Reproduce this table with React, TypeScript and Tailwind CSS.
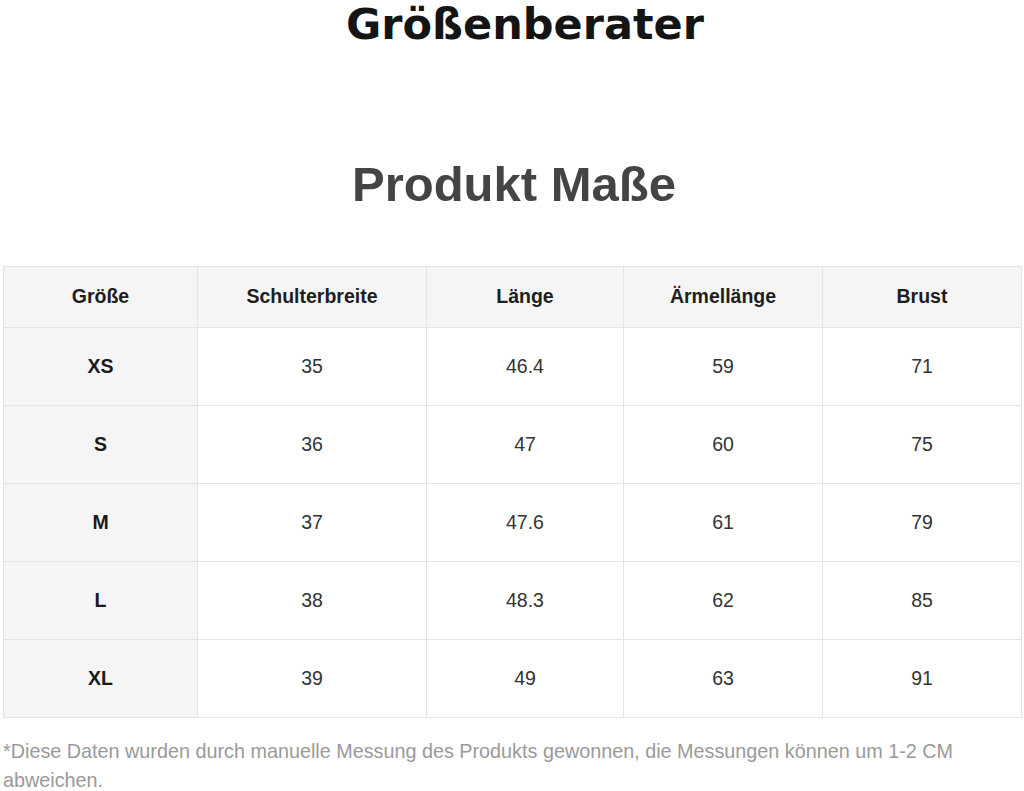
const columns = ["Größe", "Schulterbreite", "Länge", "Ärmellänge", "Brust"];
const widths = ["w-[194px]", "w-[229px]", "w-[197px]", "w-[199px]", "w-[199px]"];

const rows = [
  ["XS", "35", "46.4", "59", "71"],
  ["S", "36", "47", "60", "75"],
  ["M", "37", "47.6", "61", "79"],
  ["L", "38", "48.3", "62", "85"],
  ["XL", "39", "49", "63", "91"],
];

export default function App() {
  return (
    <div className="min-h-screen bg-white font-['Liberation_Sans',Arial,sans-serif]">
      {/* Titles */}
      <h1 className="text-center text-[43px] leading-[48px] font-bold text-[#141414] font-['DejaVu_Sans',sans-serif] pl-[26px]">
        Größenberater
      </h1>
      <h2 className="mt-[108px] text-center text-[49px] leading-[56px] font-bold text-[#444444] pl-[4px]">
        Produkt Maße
      </h2>

      {/* Size table */}
      <div className="mt-[54px] px-[3px]">
        <table className="w-full table-fixed border-collapse border border-[#e4e4e4] text-[19.5px] text-center">
          <colgroup>
            {widths.map((w, i) => (
              <col key={i} className={w} />
            ))}
          </colgroup>
          <thead>
            <tr className="h-[61px] bg-[#f5f5f5]">
              {columns.map((c) => (
                <th key={c} className="border border-[#e4e4e4] font-bold text-[#1e1e1e]">
                  {c}
                </th>
              ))}
            </tr>
          </thead>
          <tbody>
            {rows.map((r) => (
              <tr key={r[0]} className="h-[78px]">
                {r.map((v, i) => (
                  <td
                    key={i}
                    className={
                      i === 0
                        ? "border border-[#e4e4e4] bg-[#f5f5f5] font-bold text-[#1a1a1a]"
                        : "border border-[#e4e4e4] bg-white text-[#333333]"
                    }
                  >
                    {v}
                  </td>
                ))}
              </tr>
            ))}
          </tbody>
        </table>
      </div>

      {/* Note */}
      <p className="mt-[19px] px-[3px] text-[19.8px] leading-[29px] text-[#9a9a9a]">
        *Diese Daten wurden durch manuelle Messung des Produkts gewonnen, die Messungen können um 1-2 CM abweichen.
      </p>
    </div>
  );
}
